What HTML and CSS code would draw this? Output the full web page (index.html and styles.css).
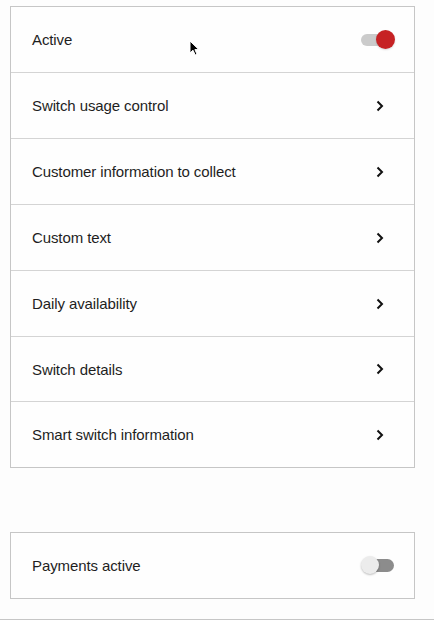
FILE: index.html
```html
<!DOCTYPE html>
<html>
<head>
<meta charset="utf-8">
<link rel="stylesheet" href="styles.css">
</head>
<body>
<div class="page">
  <div class="card">
    <div class="row">
      <span class="label">Active</span>
      <span class="toggle on"><span class="track"></span><span class="knob"></span></span>
    </div>
    <div class="row">
      <span class="label">Switch usage control</span>
      <svg class="chev" width="8" height="12" viewBox="0 0 8 12"><path d="M1.5 1.5 L6 6 L1.5 10.5" fill="none" stroke="#111" stroke-width="2"/></svg>
    </div>
    <div class="row">
      <span class="label">Customer information to collect</span>
      <svg class="chev" width="8" height="12" viewBox="0 0 8 12"><path d="M1.5 1.5 L6 6 L1.5 10.5" fill="none" stroke="#111" stroke-width="2"/></svg>
    </div>
    <div class="row">
      <span class="label">Custom text</span>
      <svg class="chev" width="8" height="12" viewBox="0 0 8 12"><path d="M1.5 1.5 L6 6 L1.5 10.5" fill="none" stroke="#111" stroke-width="2"/></svg>
    </div>
    <div class="row">
      <span class="label">Daily availability</span>
      <svg class="chev" width="8" height="12" viewBox="0 0 8 12"><path d="M1.5 1.5 L6 6 L1.5 10.5" fill="none" stroke="#111" stroke-width="2"/></svg>
    </div>
    <div class="row short">
      <span class="label">Switch details</span>
      <svg class="chev" width="8" height="12" viewBox="0 0 8 12"><path d="M1.5 1.5 L6 6 L1.5 10.5" fill="none" stroke="#111" stroke-width="2"/></svg>
    </div>
    <div class="row">
      <span class="label">Smart switch information</span>
      <svg class="chev" width="8" height="12" viewBox="0 0 8 12"><path d="M1.5 1.5 L6 6 L1.5 10.5" fill="none" stroke="#111" stroke-width="2"/></svg>
    </div>
  </div>
  <div class="card second">
    <div class="row">
      <span class="label">Payments active</span>
      <span class="toggle off"><span class="track"></span><span class="knob"></span></span>
    </div>
  </div>
  <div class="footer"></div>
</div>
<svg class="cursor" width="11" height="16" viewBox="0 0 11 16"><path d="M1 1 L1 13 L4 10.2 L6.2 15 L8 14.2 L5.9 9.6 L9.8 9.6 Z" fill="#000" stroke="#fff" stroke-width="1"/></svg>
</body>
</html>
```
FILE: styles.css
```css
html, body {
  margin: 0;
  padding: 0;
  background: #fdfdfd;
  font-family: "Liberation Sans", Arial, sans-serif;
  color: #1e1e1e;
}
.page {
  padding-top: 6px;
  position: relative;
}
.card {
  width: 403px;
  margin-left: 10px;
  border: 1px solid #c6c6c6;
  background: #fefefe;
}
.card.second {
  margin-top: 64px;
}
.row {
  height: 65px;
  display: flex;
  align-items: center;
  justify-content: space-between;
  padding: 0 19px 0 21px;
  border-bottom: 1px solid #d4d4d4;
}
.row.short {
  height: 64px;
}
.row:last-child {
  border-bottom: none;
}
.label {
  font-size: 15px;
  letter-spacing: -0.1px;
}
.chev {
  margin-right: 11px;
  display: block;
}
.toggle {
  position: relative;
  width: 36px;
  height: 20px;
  display: block;
}
.toggle .track {
  position: absolute;
  border-radius: 7px;
}
.toggle .knob {
  position: absolute;
  border-radius: 50%;
}
.toggle.on .track {
  left: 2px;
  top: 4px;
  width: 30px;
  height: 12px;
  background: #cbcbcb;
}
.toggle.on .knob {
  right: 0;
  top: 0;
  width: 19px;
  height: 19px;
  background: #c62224;
  box-shadow: 0 1px 2px rgba(0,0,0,0.15);
}
.toggle.off .track {
  left: 5px;
  top: 3px;
  width: 30px;
  height: 13px;
  background: #8c8c8c;
}
.toggle.off .knob {
  left: 2px;
  top: 0;
  width: 18px;
  height: 18px;
  background: #ececec;
  box-shadow: 0 1px 2px rgba(0,0,0,0.25);
}
.footer {
  margin-top: 20px;
  border-top: 1px solid #c6c6c6;
  height: 1px;
}
.cursor {
  position: absolute;
  left: 189px;
  top: 40px;
}
```
